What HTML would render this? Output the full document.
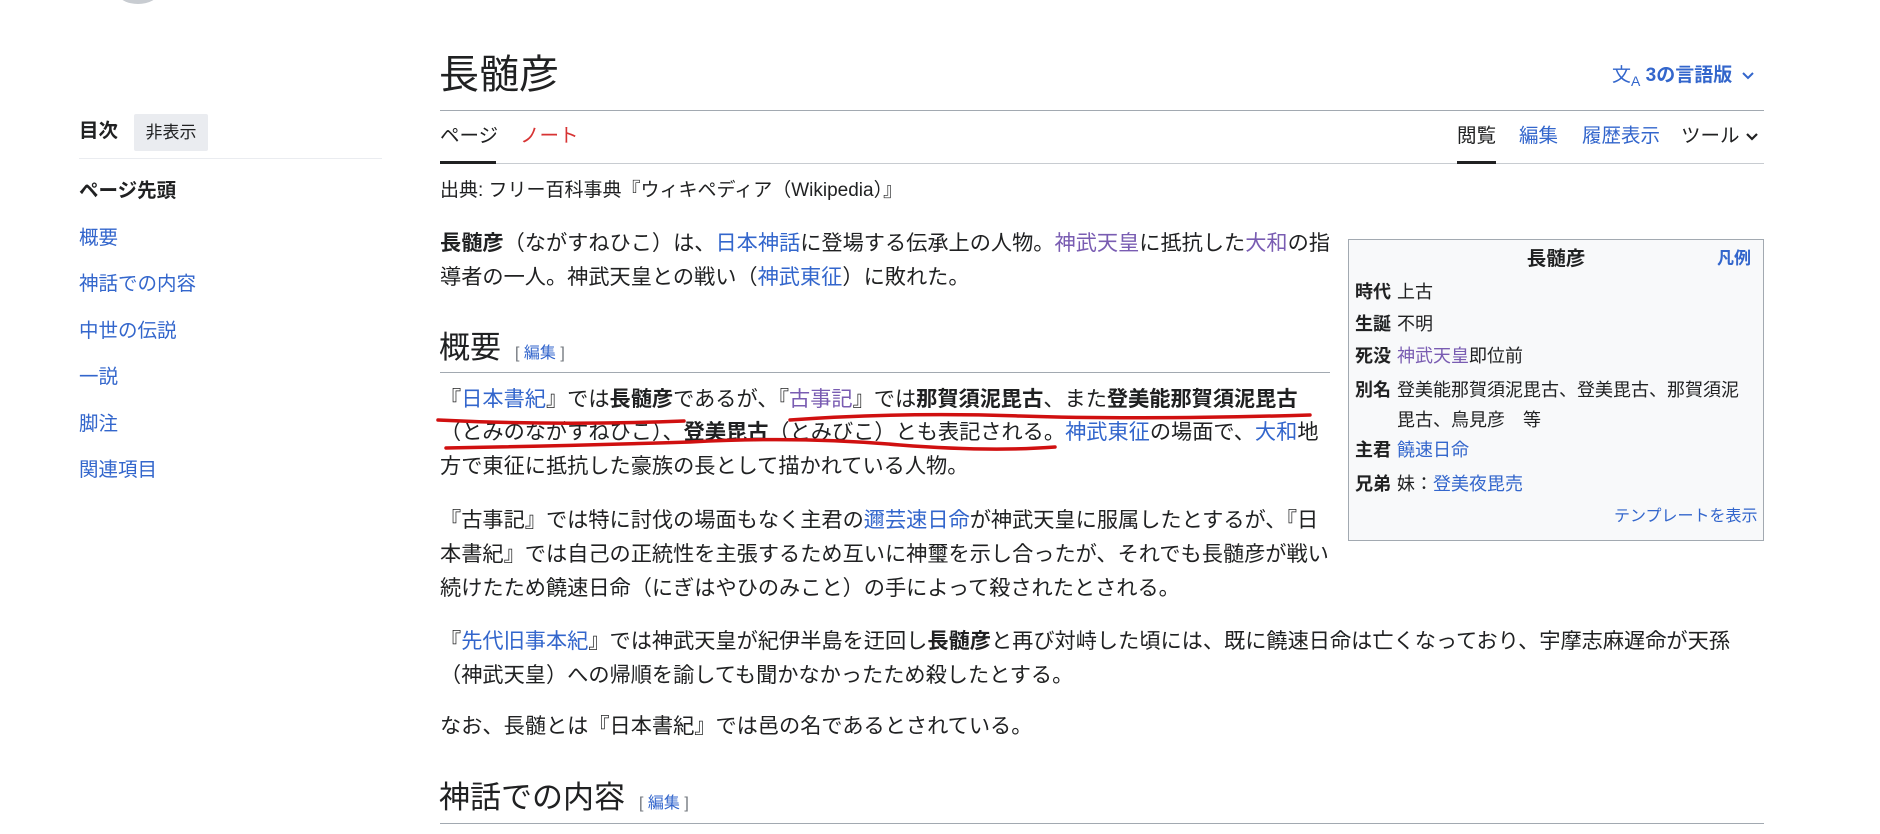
<!DOCTYPE html>
<html><head><meta charset="utf-8"><style>
*{margin:0;padding:0;box-sizing:border-box}
body{width:1880px;height:834px;overflow:hidden;background:#fff;color:#202122;font-family:"Liberation Sans","Noto Sans CJK JP",sans-serif;position:relative}
.a{position:absolute;white-space:nowrap}
.l{font-size:21.2px;line-height:34px;left:440px}
a{text-decoration:none;color:#3366cc}
.v{color:#795cb2}
b{font-weight:bold}
.sb{font-size:19.5px;line-height:30px;left:79px;color:#3366cc}
.ib{font-size:18px;line-height:30px}
.ib b{margin-right:6px}
</style></head><body>
<div class="a" style="left:118px;top:-18px;width:40px;height:22px;border-radius:50%;background:#c8ccd1"></div>

<div class="a" style="left:79px;top:117px;font-size:19.5px;line-height:28px;font-weight:bold">目次</div>
<div class="a" style="left:134px;top:114px;width:74px;height:37px;background:#eaecf0;border-radius:2px;font-size:17px;line-height:37px;text-align:center;color:#202122">非表示</div>
<div class="a" style="left:79px;top:158px;width:303px;height:1px;background:#eaecf0"></div>
<div class="a sb" style="top:176px;color:#202122;font-weight:bold">ページ先頭</div>
<div class="a sb" style="top:223px">概要</div>
<div class="a sb" style="top:269px">神話での内容</div>
<div class="a sb" style="top:316px">中世の伝説</div>
<div class="a sb" style="top:362px">一説</div>
<div class="a sb" style="top:409px">脚注</div>
<div class="a sb" style="top:455px">関連項目</div>

<div class="a" style="left:439px;top:50px;font-size:40px;line-height:50px">長髄彦</div>
<div class="a" style="left:1612px;top:62px;font-size:19px;line-height:28px;color:#3366cc;font-weight:bold"><span style="font-weight:normal">文<sub style="font-size:14px">A</sub></span> 3の言語版 <svg width="14" height="10" style="margin-left:4px" viewBox="0 0 14 10"><path d="M2 2l5 5 5-5" stroke="#3366cc" stroke-width="2" fill="none"/></svg></div>
<div class="a" style="left:440px;top:110px;width:1324px;height:1px;background:#a2a9b1"></div>

<div class="a" style="left:440px;top:122px;font-size:19.5px;line-height:28px">ページ</div>
<div class="a" style="left:520px;top:122px;font-size:19.5px;line-height:28px;color:#d73333">ノート</div>
<div class="a" style="left:1457px;top:122px;font-size:19.5px;line-height:28px">閲覧</div>
<div class="a" style="left:1519px;top:122px;font-size:19.5px;line-height:28px;color:#3366cc">編集</div>
<div class="a" style="left:1582px;top:122px;font-size:19.5px;line-height:28px;color:#3366cc">履歴表示</div>
<div class="a" style="left:1681px;top:122px;font-size:19.5px;line-height:28px">ツール <svg width="14" height="10" viewBox="0 0 14 10"><path d="M2 2l5 5 5-5" stroke="#202122" stroke-width="2.2" fill="none"/></svg></div>
<div class="a" style="left:440px;top:163px;width:1324px;height:1px;background:#c8ccd1"></div>
<div class="a" style="left:440px;top:161px;width:56px;height:3px;background:#202122"></div>
<div class="a" style="left:1457px;top:161px;width:39px;height:3px;background:#202122"></div>

<div class="a" style="left:440px;top:177px;font-size:19px;line-height:28px">出典: フリー百科事典『ウィキペディア（Wikipedia）』</div>

<div class="a" style="left:1348px;top:239px;width:416px;height:302px;background:#f8f9fa;border:1px solid #a2a9b1"></div>
<div class="a" style="left:1348px;top:245px;width:416px;text-align:center;font-size:19.5px;line-height:28px;font-weight:bold">長髄彦</div>
<div class="a" style="left:1717px;top:246px;font-size:17px;line-height:26px;font-weight:bold;color:#3366cc">凡例</div>
<div class="a ib" style="left:1355px;top:277px"><b>時代</b>上古</div>
<div class="a ib" style="left:1355px;top:309px"><b>生誕</b>不明</div>
<div class="a ib" style="left:1355px;top:341px"><b>死没</b><a class="v">神武天皇</a>即位前</div>
<div class="a ib" style="left:1355px;top:375px"><b>別名</b>登美能那賀須泥毘古、登美毘古、那賀須泥</div>
<div class="a ib" style="left:1397px;top:405px">毘古、鳥見彦　等</div>
<div class="a ib" style="left:1355px;top:435px"><b>主君</b><a>饒速日命</a></div>
<div class="a ib" style="left:1355px;top:469px"><b>兄弟</b>妹：<a>登美夜毘売</a></div>
<div class="a" style="left:1614px;top:505px;font-size:16px;line-height:24px;color:#3366cc">テンプレートを表示</div>

<div class="a l" style="top:227px"><b>長髄彦</b>（ながすねひこ）は、<a>日本神話</a>に登場する伝承上の人物。<a class="v">神武天皇</a>に抵抗した<a class="v">大和</a>の指</div>
<div class="a l" style="top:261px">導者の一人。神武天皇との戦い（<a>神武東征</a>）に敗れた。</div>

<div class="a" style="left:439px;top:329px;font-size:31px;line-height:38px">概要<span style="font-size:16px;color:#72777d;margin-left:14px">[ <a>編集</a> ]</span></div>
<div class="a" style="left:440px;top:372px;width:890px;height:1px;background:#a2a9b1"></div>

<div class="a l" style="top:383px">『<a>日本書紀</a>』では<b>長髄彦</b>であるが、『<a class="v">古事記</a>』では<b>那賀須泥毘古</b>、また<b>登美能那賀須泥毘古</b></div>
<div class="a l" style="top:416px">（とみのながすねひこ）、<b>登美毘古</b>（とみびこ）とも表記される。<a>神武東征</a>の場面で、<a>大和</a>地</div>
<div class="a l" style="top:450px">方で東征に抵抗した豪族の長として描かれている人物。</div>

<div class="a l" style="top:504px">『古事記』では特に討伐の場面もなく主君の<a>邇芸速日命</a>が神武天皇に服属したとするが、『日</div>
<div class="a l" style="top:538px">本書紀』では自己の正統性を主張するため互いに神璽を示し合ったが、それでも長髄彦が戦い</div>
<div class="a l" style="top:572px">続けたため饒速日命（にぎはやひのみこと）の手によって殺されたとされる。</div>

<div class="a l" style="top:625px">『<a>先代旧事本紀</a>』では神武天皇が紀伊半島を迂回し<b>長髄彦</b>と再び対峙した頃には、既に饒速日命は亡くなっており、宇摩志麻遅命が天孫</div>
<div class="a l" style="top:659px">（神武天皇）への帰順を諭しても聞かなかったため殺したとする。</div>

<div class="a l" style="top:710px">なお、長髄とは『日本書紀』では邑の名であるとされている。</div>

<div class="a" style="left:439px;top:779px;font-size:31px;line-height:38px">神話での内容<span style="font-size:16px;color:#72777d;margin-left:14px">[ <a>編集</a> ]</span></div>
<div class="a" style="left:440px;top:823px;width:1324px;height:1px;background:#a2a9b1"></div>

<svg class="a" style="left:0;top:0" width="1880" height="834">
<g stroke="#d01010" stroke-width="3.5" fill="none" stroke-linecap="round">
<path d="M438 420 Q560 426 684 421"/>
<path d="M790 420 Q900 412 1020 416 T1310 415"/>
<path d="M446 448 Q560 446 690 442 Q800 436 900 445 Q990 452 1055 447"/>
</g></svg>
</body></html>
